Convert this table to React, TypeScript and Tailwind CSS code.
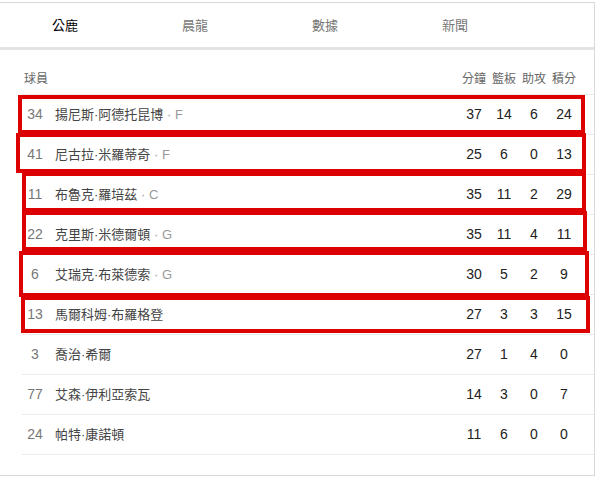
import React from "react";

type Row = { no: string; name: string; pos?: string; s: [string, string, string, string] };

const rows: Row[] = [
  { no: "34", name: "揚尼斯·阿德托昆博", pos: "F", s: ["37", "14", "6", "24"] },
  { no: "41", name: "尼古拉·米羅蒂奇", pos: "F", s: ["25", "6", "0", "13"] },
  { no: "11", name: "布魯克·羅培茲", pos: "C", s: ["35", "11", "2", "29"] },
  { no: "22", name: "克里斯·米德爾頓", pos: "G", s: ["35", "11", "4", "11"] },
  { no: "6", name: "艾瑞克·布萊德索", pos: "G", s: ["30", "5", "2", "9"] },
  { no: "13", name: "馬爾科姆·布羅格登", s: ["27", "3", "3", "15"] },
  { no: "3", name: "喬治·希爾", s: ["27", "1", "4", "0"] },
  { no: "77", name: "艾森·伊利亞索瓦", s: ["14", "3", "0", "7"] },
  { no: "24", name: "帕特·康諾頓", s: ["11", "6", "0", "0"] },
];

const boxes = [
  { l: 18, t: 95, w: 567, h: 39 },
  { l: 16, t: 133, w: 570, h: 40 },
  { l: 22, t: 172, w: 564, h: 40 },
  { l: 22, t: 211, w: 565, h: 40 },
  { l: 19, t: 251, w: 570, h: 46 },
  { l: 21, t: 296, w: 569, h: 37 },
];

const mixed = { fontFamily: '"Liberation Sans", "Noto Sans CJK TC", sans-serif' };
const cjk = { fontFamily: '"Noto Sans CJK TC", "Noto Sans", sans-serif' };
const num = { fontFamily: '"Liberation Sans", Arial, sans-serif' };

export default function App() {
  return (
    <div className="relative w-[600px] h-[478px] bg-white overflow-hidden" style={cjk}>
      <div className="mt-[2px] w-[595px] h-[474px] border-t border-r border-b border-[#d9d9d9] flex flex-col">
        <div className="h-[47px] grid grid-cols-[130px_130px_130px_130px] items-center text-[13px] border-b-[3px] border-[#e3e3e3]">
          <div className="text-center text-black">公鹿</div>
          <div className="text-center text-[#777]">晨龍</div>
          <div className="text-center text-[#777]">數據</div>
          <div className="text-center text-[#777]">新聞</div>
        </div>
        <div className="pl-[22px] pt-[12px]">
          <div className="h-[33px] flex items-center border-b border-[#ececec] text-[12px] text-[#666]">
            <div className="pl-[2px] flex-1">球員</div>
            <div className="flex pr-[15px]">
              <div className="w-[30px] text-center">分鐘</div>
              <div className="w-[30px] text-center">籃板</div>
              <div className="w-[30px] text-center">助攻</div>
              <div className="w-[30px] text-center">積分</div>
            </div>
          </div>
          {rows.map((r) => (
            <div key={r.no + r.name} className="h-[40px] flex items-center border-b border-[#ececec]">
              <div className="w-[26px] text-center text-[14px] text-[#777]" style={num}>
                {r.no}
              </div>
              <div className="ml-[7px] flex-1 text-[13px] text-[#444]" style={mixed}>
                {r.name}
                {r.pos && <span className="text-[#999]">{" · " + r.pos}</span>}
              </div>
              <div className="flex pr-[15px] text-[14px] text-[#222]" style={num}>
                {r.s.map((v, i) => (
                  <div key={i} className="w-[30px] text-center">
                    {v}
                  </div>
                ))}
              </div>
            </div>
          ))}
        </div>
      </div>
      {boxes.map((b, i) => (
        <div
          key={i}
          className="absolute border-[4px] border-[#dc0000] pointer-events-none"
          style={{ left: b.l, top: b.t, width: b.w, height: b.h }}
        />
      ))}
    </div>
  );
}
